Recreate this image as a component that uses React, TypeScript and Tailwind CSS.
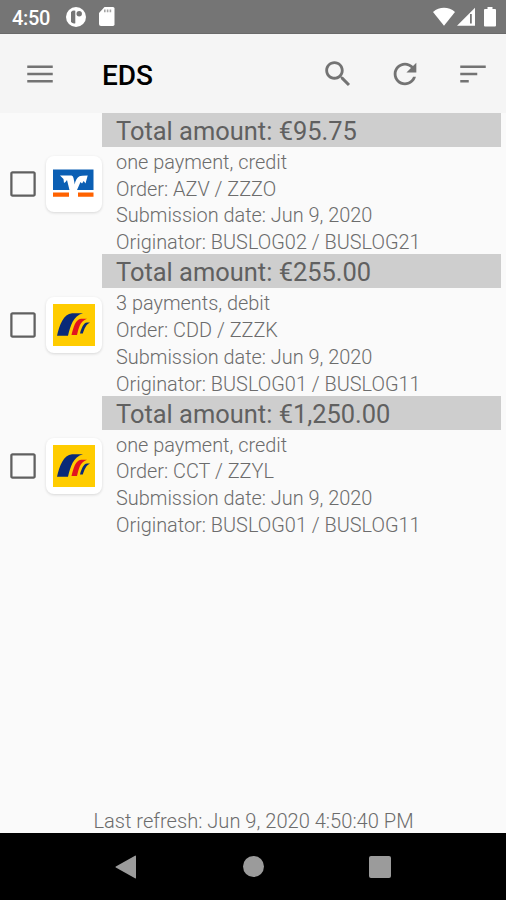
const payments = [
  {
    amount: "€95.75",
    summary: "one payment, credit",
    order: "AZV / ZZZO",
    date: "Jun 9, 2020",
    originator: "BUSLOG02 / BUSLOG21",
    bank: "volksbank",
  },
  {
    amount: "€255.00",
    summary: "3 payments, debit",
    order: "CDD / ZZZK",
    date: "Jun 9, 2020",
    originator: "BUSLOG01 / BUSLOG11",
    bank: "postbank",
  },
  {
    amount: "€1,250.00",
    summary: "one payment, credit",
    order: "CCT / ZZYL",
    date: "Jun 9, 2020",
    originator: "BUSLOG01 / BUSLOG11",
    bank: "postbank",
  },
]

function Icon({ d }: { d: string }) {
  return (
    <svg viewBox="0 0 24 24" className="size-[34px] shrink-0" fill="currentColor">
      <path d={d} />
    </svg>
  )
}

const icons = {
  menu: "M3 18h18v-1.7H3V18zm0-5.150h18v-1.7H3v1.7zM3 6v1.700h18V6H3z",
  search:
    "M15.500 14h-.79l-.28-.27C15.410 12.590 16 11.110 16 9.500 16 5.910 13.090 3 9.500 3S3 5.910 3 9.500 5.910 16 9.500 16c1.610 0 3.090-.59 4.230-1.570l.27.28v.79l5 4.990L20.490 19l-4.990-5zm-6 0C7.010 14 5 11.990 5 9.500S7.010 5 9.500 5 14 7.010 14 9.500 11.990 14 9.500 14z",
  refresh:
    "M17.650 6.350C16.200 4.900 14.210 4 12 4c-4.420 0-7.990 3.580-7.990 8s3.570 8 7.990 8c3.730 0 6.840-2.550 7.730-6h-2.080c-.82 2.330-3.040 4-5.650 4-3.310 0-6-2.690-6-6s2.690-6 6-6c1.660 0 3.140.69 4.220 1.780L13 11h7V4l-2.350 2.350z",
  sort: "M3 18h6v-1.700H3V18zM3 6v1.700h18V6H3zm0 6.850h12v-1.700H3v1.700z",
  checkbox:
    "M19.400 4.600v14.800H4.600V4.600h14.800m0-1.600H4.600C3.700 3 3 3.700 3 4.600v14.800c0 .9.700 1.600 1.600 1.600h14.800c.9 0 1.600-.7 1.600-1.600V4.600c0-.9-.7-1.600-1.600-1.600z",
}

function StatusBar() {
  return (
    <div className="flex h-[34px] items-center border-b border-[#6a6a6a] bg-[#757575] pl-3 pr-2.5 text-white">
      <span className="w-[39px] pt-[3px] text-[20px] font-medium leading-none tracking-[-0.3px]">4:50</span>
      <svg viewBox="0 0 20 20" className="ml-[14.500px] size-5" fill="currentColor">
        <circle cx="10" cy="10" r="10" />
        <path d="M5 5Q7 3 9.300 3.800v12.400Q7 17 5 15z" fill="#757575" />
        <circle cx="13.200" cy="6.800" r="2.700" fill="#757575" />
      </svg>
      <svg viewBox="0 0 16 19" className="ml-[13.500px] h-[19px] w-4" fill="currentColor">
        <path d="M5.500 0H14q1.500 0 1.500 1.500v15.700q0 1.800-1.500 1.800H2q-2 0-2-2V6z" />
        <path d="M5 2.500h1.600v2.800H5zM7.800 2.500h1.600v2.800H7.800zM10.600 2.500h1.600v2.800h-1.600z" fill="#a5a5a5" />
      </svg>
      <svg viewBox="0 0 22 19" className="ml-auto h-[19px] w-[22px]" fill="currentColor">
        <path d="M11 18.800 0 5Q5 .8 11 .8T22 5z" />
      </svg>
      <svg viewBox="0 0 19 19" className="ml-0.5 h-[19px] w-[19px]" fill="currentColor">
        <path d="M0 18.700 18 .7v18z" />
        <path d="M13 7h1.800v9.500H13z" fill="#757575" />
      </svg>
      <svg viewBox="0 0 12 20" className="ml-2 h-5 w-3" fill="currentColor">
        <path d="M3.500 0h5v2H11q1 0 1 1v15.500q0 1-1 1H1q-1 0-1-1V3q0-1 1-1h2.500z" />
      </svg>
    </div>
  )
}

function Toolbar() {
  return (
    <header className="flex h-[79px] items-center bg-[#f5f5f5] pl-[23px] pr-4 text-[#737373]">
      <Icon d={icons.menu} />
      <h1 className="ml-[45px] mr-auto pt-1 text-[28px] font-medium leading-none text-black">EDS</h1>
      <div className="flex gap-[33.700px]">
        <Icon d={icons.search} />
        <Icon d={icons.refresh} />
        <Icon d={icons.sort} />
      </div>
    </header>
  )
}

function VolksbankLogo() {
  return (
    <svg viewBox="0 0 42 42" className="size-[42px]">
      <path d="M0 6.500h40.500v20.500H0z" fill="#0b5fb4" />
      <path d="M0 29.500h16v4.200H0zM25 29.500h15.500v4.200H25z" fill="#ff6200" />
      <path
        d="M7 12.500h11.500q1.500 0 2 2.500l1.300 6.500q1-6.500 4.700-8.200 1.500-.8 8.200-.8l-2.200 8-1.800-2.500-1.700 2.500-1.500-1.500L24 27v7h-7.500v-7L14 17l-1.500 2-1.500 1-.5-4z"
        fill="#fff"
      />
    </svg>
  )
}

function PostbankLogo() {
  return (
    <svg viewBox="0 0 42 42" className="size-[42px]">
      <path d="M0 0h42v42H0z" fill="#ffcc00" />
      <path d="M4 31.700C6.500 21 10.500 10 19 9.300h11C20 12 17.500 22 15 31.700z" fill="#0a2a78" />
      <path d="M18.500 31C20.500 23 22.500 15.500 28 14.800h6C26.500 17.500 26 24 24 31z" fill="#e2141e" />
      <path d="M27 29.500C28.500 24 30.500 19 34 18.600h3C32.500 21 31.500 25 29.800 29.500z" fill="#0a2a78" />
    </svg>
  )
}

function PaymentRow({ payment }: { payment: (typeof payments)[number] }) {
  return (
    <li className="flex h-[141.400px] items-center pr-[5px]">
      <div className="flex w-[102px] shrink-0 items-center pl-1.5 text-[#606060]">
        <Icon d={icons.checkbox} />
        <div className="ml-[5.500px] flex size-14 items-center justify-center rounded-lg bg-white shadow-[0_1px_3px_rgba(0,0,0,0.14)]">
          {payment.bank === "volksbank" ? <VolksbankLogo /> : <PostbankLogo />}
        </div>
      </div>
      <div className="h-full grow text-[19.900px] leading-[26.700px] text-[#6c6c6c]">
        <h2 className="h-[34px] bg-[#cecece] pl-[14px] pt-px text-[25.450px] leading-[35px] text-[#606060]">
          Total amount: {payment.amount}
        </h2>
        <div className="pl-[14px] pt-[3px] font-light">
          <p>{payment.summary}</p>
          <p>Order: {payment.order}</p>
          <p>Submission date: {payment.date}</p>
          <p>Originator: {payment.originator}</p>
        </div>
      </div>
    </li>
  )
}

export default function App() {
  return (
    <div className="flex h-[900px] w-[506px] flex-col overflow-hidden bg-[#fafafa] font-['Roboto',sans-serif]">
      <StatusBar />
      <Toolbar />
      <ul className="grow">
        {payments.map((payment, index) => (
          <PaymentRow key={index} payment={payment} />
        ))}
      </ul>
      <p className="pl-px text-center text-[20.100px] font-light leading-6 text-[#6c6c6c]">
        Last refresh: Jun 9, 2020 4:50:40 PM
      </p>
      <nav className="flex h-[67px] items-center bg-black pl-[115px] text-[#9b9b9b]">
        <svg viewBox="0 0 21 24" className="h-6 w-[21px]" fill="currentColor">
          <path d="M21 1.300v21.500q0 1-1 .5L.8 12.500q-.8-.5 0-1L20 .7q1-.5 1 .6z" />
        </svg>
        <div className="ml-[107px] size-[21px] rounded-full bg-current" />
        <div className="ml-[105px] size-[22px] rounded-xs bg-current" />
      </nav>
    </div>
  )
}
